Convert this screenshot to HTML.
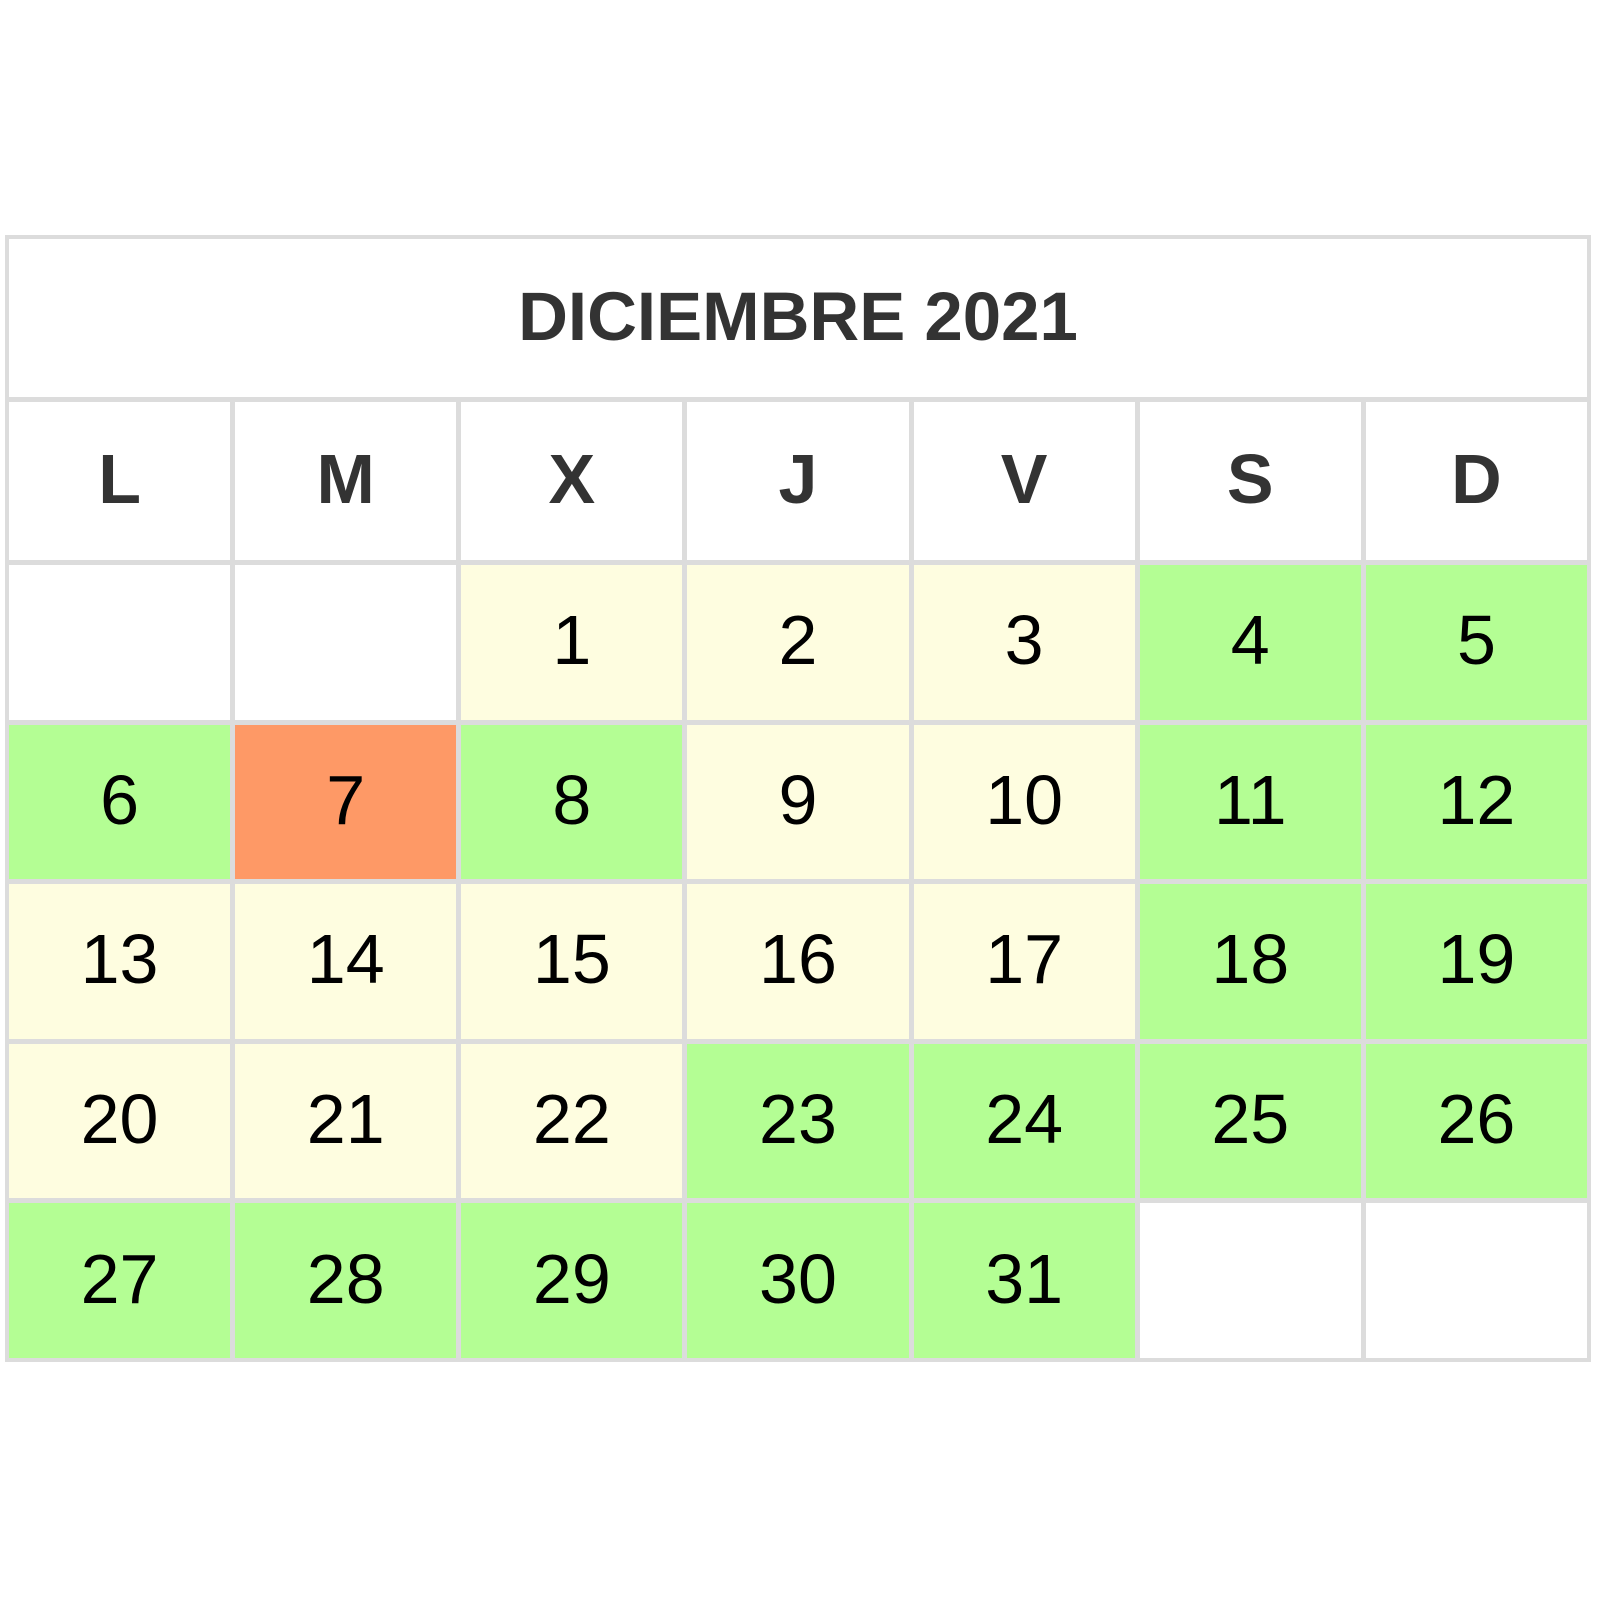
<!DOCTYPE html>
<html><head><meta charset="utf-8"><style>
html,body{margin:0;padding:0;background:#fff;width:1600px;height:1600px;overflow:hidden}
.t{position:absolute;left:5px;top:235px;width:1586px;height:1127px;box-sizing:border-box;background:#dcdcdc;padding:4px;display:grid;grid-template-columns:repeat(7,1fr);grid-template-rows:158px 158px repeat(5,1fr);gap:5px;font-family:"Liberation Sans",Arial,sans-serif}
.t div{background:#fff;display:flex;align-items:center;justify-content:center;font-size:70px;color:#000;padding-bottom:4px;box-sizing:border-box}
.t .ti{grid-column:1/8;font-weight:bold;color:#333;font-size:69px}
.t .h{font-weight:bold;color:#333;font-size:70px}
.t .y{background:#fefde0}
.t .g{background:#b4fe94}
.t .o{background:#fe9966}
</style></head><body>
<div class="t">
<div class="ti">DICIEMBRE 2021</div>
<div class="h">L</div><div class="h">M</div><div class="h">X</div><div class="h">J</div><div class="h">V</div><div class="h">S</div><div class="h">D</div>
<div></div><div></div><div class="y">1</div><div class="y">2</div><div class="y">3</div><div class="g">4</div><div class="g">5</div>
<div class="g">6</div><div class="o">7</div><div class="g">8</div><div class="y">9</div><div class="y">10</div><div class="g">11</div><div class="g">12</div>
<div class="y">13</div><div class="y">14</div><div class="y">15</div><div class="y">16</div><div class="y">17</div><div class="g">18</div><div class="g">19</div>
<div class="y">20</div><div class="y">21</div><div class="y">22</div><div class="g">23</div><div class="g">24</div><div class="g">25</div><div class="g">26</div>
<div class="g">27</div><div class="g">28</div><div class="g">29</div><div class="g">30</div><div class="g">31</div><div></div><div></div>
</div>
</body></html>
